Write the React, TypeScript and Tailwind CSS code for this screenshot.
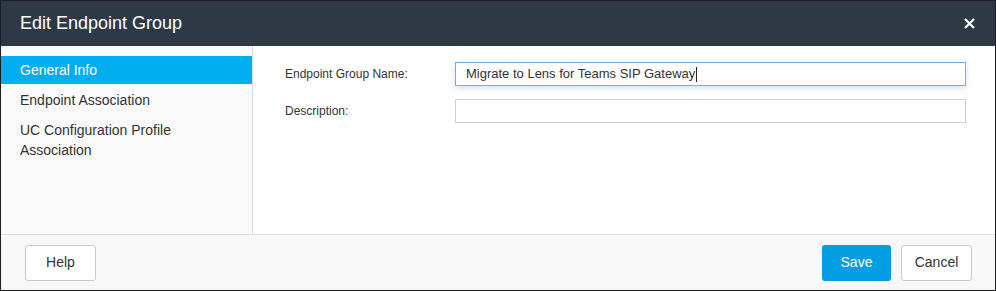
import React from "react";

const navItems = [
  { label: "General Info", active: true },
  { label: "Endpoint Association", active: false },
  { label: "UC Configuration Profile Association", active: false },
];

export default function App() {
  return (
    <div
      className="flex h-[291px] w-[996px] flex-col border border-[#1e1e1e] bg-white text-[#333]"
      style={{ fontFamily: '"Liberation Sans", Arial, sans-serif' }}
    >
      <header className="flex h-[45px] shrink-0 items-center justify-between bg-[#2f3945] pl-[19px] pr-[16px]">
        <h1 className="text-[18px] text-white">Edit Endpoint Group</h1>
        <button className="flex h-5 w-5 items-center justify-center text-white">
          <svg width="11" height="11" viewBox="0 0 11 11">
            <path d="M1 1L10 10M10 1L1 10" stroke="white" strokeWidth="2.2" />
          </svg>
        </button>
      </header>

      <div className="flex min-h-0 flex-1">
        <aside className="w-[252px] shrink-0 border-r border-[#dcdcdc] bg-[#fafafa] pt-[10px] shadow-[1px_0_3px_rgba(0,0,0,0.06)]">
          <nav className="flex flex-col gap-[2px]">
            {navItems.map((item) => (
              <div
                key={item.label}
                className={
                  item.active
                    ? "bg-[#00aeef] py-1 pl-[19px] pr-4 text-[14px] leading-5 text-white"
                    : "py-1 pl-[19px] pr-16 text-[14px] leading-5 text-[#333]"
                }
              >
                {item.label}
              </div>
            ))}
          </nav>
        </aside>

        <main className="flex-1 bg-white pl-[32px] pr-[29px] pt-[16px]">
          <div className="flex flex-col gap-[13px]">
            <div className="flex items-center">
              <label className="w-[170px] shrink-0 text-[12px]">Endpoint Group Name:</label>
              <div className="flex h-[24px] flex-1 items-center border border-[#74aee6] pl-[10px] text-[13px] text-[#333] shadow-[0_2px_6px_rgba(66,139,202,0.25)]">
                Migrate to Lens for Teams SIP Gateway
                <span className="ml-[1px] inline-block h-[15px] w-px bg-[#222]" />
              </div>
            </div>
            <div className="flex items-center">
              <label className="w-[170px] shrink-0 text-[12px]">Description:</label>
              <div className="h-[24px] flex-1 border border-[#cfcfcf]" />
            </div>
          </div>
        </main>
      </div>

      <footer className="flex h-[56px] shrink-0 items-center justify-between border-t border-[#dedede] bg-[#f8f8f8] pl-[24px] pr-[23px]">
        <button className="h-[36px] w-[71px] rounded-[3px] border border-[#c8c8c8] bg-white text-[14px] text-[#333]">
          Help
        </button>
        <div className="flex gap-[10px]">
          <button className="h-[36px] w-[69px] rounded-[3px] bg-[#049fe3] text-[14px] text-white">
            Save
          </button>
          <button className="h-[36px] w-[71px] rounded-[3px] border border-[#c8c8c8] bg-white text-[14px] text-[#333]">
            Cancel
          </button>
        </div>
      </footer>
    </div>
  );
}
